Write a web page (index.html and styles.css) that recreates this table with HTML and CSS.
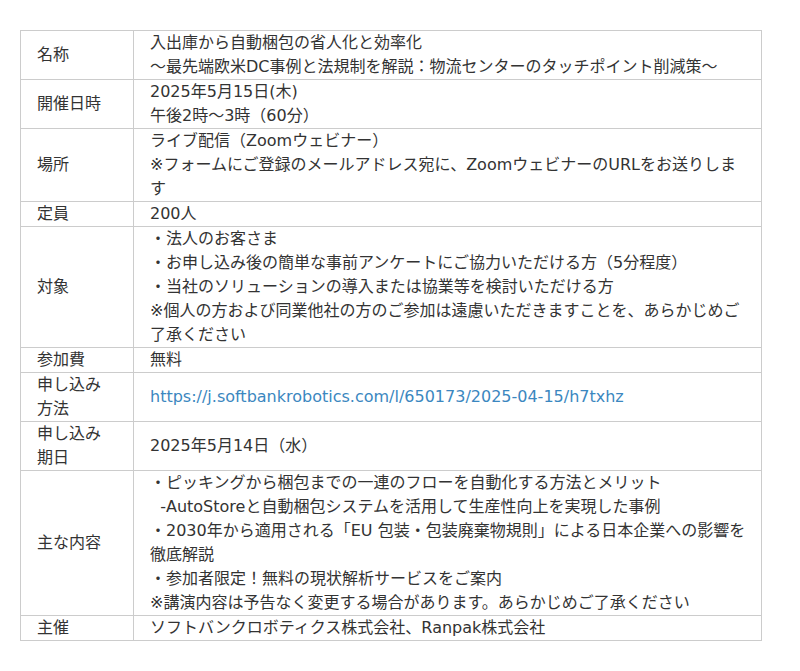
FILE: index.html
```html
<!DOCTYPE html>
<html lang="ja">
<head>
<meta charset="utf-8">
<link rel="stylesheet" href="styles.css">
</head>
<body>
<table class="info">
  <tr><th>名称</th><td>入出庫から自動梱包の省人化と効率化<br>～最先端欧米DC事例と法規制を解説：物流センターのタッチポイント削減策～</td></tr>
  <tr><th>開催日時</th><td>2025年5月15日(木)<br>午後2時～3時（60分）</td></tr>
  <tr><th>場所</th><td>ライブ配信（Zoomウェビナー）<br>※フォームにご登録のメールアドレス宛に、ZoomウェビナーのURLをお送りします</td></tr>
  <tr><th>定員</th><td>200人</td></tr>
  <tr><th>対象</th><td>・法人のお客さま<br>・お申し込み後の簡単な事前アンケートにご協力いただける方（5分程度）<br>・当社のソリューションの導入または協業等を検討いただける方<br>※個人の方および同業他社の方のご参加は遠慮いただきますことを、あらかじめご了承ください</td></tr>
  <tr><th>参加費</th><td>無料</td></tr>
  <tr><th>申し込み<br>方法</th><td><a class="link" href="#">https://j.softbankrobotics.com/l/650173/2025-04-15/h7txhz</a></td></tr>
  <tr><th>申し込み<br>期日</th><td>2025年5月14日（水）</td></tr>
  <tr><th>主な内容</th><td>・ピッキングから梱包までの一連のフローを自動化する方法とメリット<br>&nbsp;&nbsp;-AutoStoreと自動梱包システムを活用して生産性向上を実現した事例<br>・2030年から適用される「EU 包装・包装廃棄物規則」による日本企業への影響を徹底解説<br>・参加者限定！無料の現状解析サービスをご案内<br>※講演内容は予告なく変更する場合があります。あらかじめご了承ください</td></tr>
  <tr><th>主催</th><td>ソフトバンクロボティクス株式会社、Ranpak株式会社</td></tr>
</table>
</body>
</html>
```
FILE: styles.css
```css
html, body {
  margin: 0;
  padding: 0;
  background: #fff;
}
body {
  padding: 30px 0 0 20px;
  font-family: "DejaVu Sans", "Noto Sans CJK JP", sans-serif;
  font-size: 16px;
  line-height: 24px;
  color: #333;
}
.info {
  border-collapse: collapse;
  width: 742px;
}
.info th, .info td {
  border: 1px solid #ccc;
  padding: 0 16px;
  text-align: left;
  font-weight: normal;
  vertical-align: middle;
}
.info td {
  padding-right: 10px;
}
.info th {
  width: 80px;
}
.link {
  color: #3b87c0;
  text-decoration: none;
}
```
